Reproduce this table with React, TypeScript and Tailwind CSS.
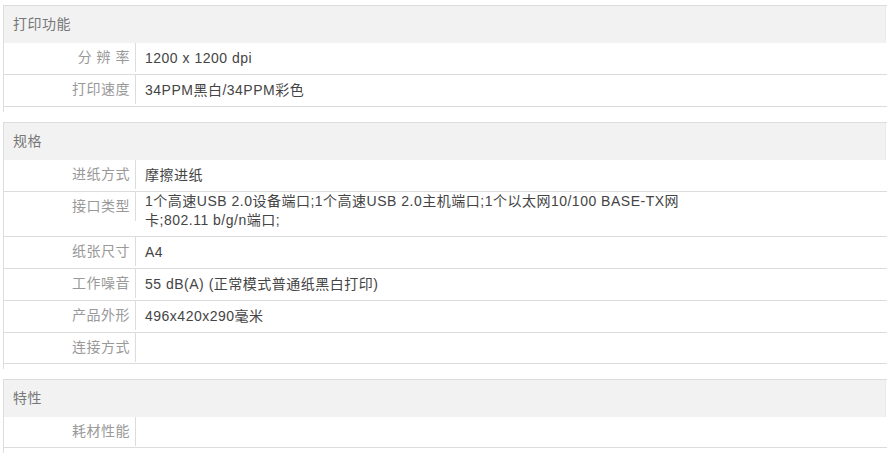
import React from "react";

type Row = { label: string; value?: string; multi?: boolean };
type Section = { title: string; rows: Row[] };

const sections: Section[] = [
  {
    title: "打印功能",
    rows: [
      { label: "分 辨 率", value: "1200 x 1200 dpi" },
      { label: "打印速度", value: "34PPM黑白/34PPM彩色" },
    ],
  },
  {
    title: "规格",
    rows: [
      { label: "进纸方式", value: "摩擦进纸" },
      {
        label: "接口类型",
        value:
          "1个高速USB 2.0设备端口;1个高速USB 2.0主机端口;1个以太网10/100 BASE-TX网卡;802.11 b/g/n端口;",
        multi: true,
      },
      { label: "纸张尺寸", value: "A4" },
      { label: "工作噪音", value: "55 dB(A) (正常模式普通纸黑白打印)" },
      { label: "产品外形", value: "496x420x290毫米" },
      { label: "连接方式", value: "" },
    ],
  },
  {
    title: "特性",
    rows: [{ label: "耗材性能", value: "" }],
  },
];

const SpecRow = ({ row }: { row: Row }) => {
  return (
    <div className="flex items-start border-b border-[#dcdcdc] min-h-[31px]">
      <div className="w-[132px] shrink-0 h-[29px] leading-[29px] text-right pr-[5px] border-r border-[#dcdcdc] text-[#999999] whitespace-pre">
        {row.label}
      </div>
      {row.multi ? (
        <div className="pl-[9px] pt-0 pb-[6px] leading-[19px] text-[#444444] max-w-[560px]">
          {row.value}
        </div>
      ) : (
        <div className="pl-[9px] pt-[6px] pb-[6px] leading-[19px] text-[#444444]">
          {row.value}
        </div>
      )}
    </div>
  );
};

export default function App() {
  return (
    <div
      className="w-[891px] h-[453px] overflow-hidden bg-white pt-[5px] pl-[3px] text-[14px] tracking-[0.5px]"
      style={{ fontFamily: '"Liberation Sans", Arial, "Noto Sans CJK SC", sans-serif' }}
    >
      {sections.map((section) => (
        <div
          key={section.title}
          className="w-[884px] border-l border-t border-[#dcdcdc] pb-[5px] mb-[10px]"
        >
          <div className="h-[37px] leading-[37px] bg-[#f2f2f2] pl-[9px] text-[#777777] border-r border-[#ebebeb] mr-[1px]">
            {section.title}
          </div>
          {section.rows.map((row) => (
            <SpecRow key={row.label} row={row} />
          ))}
        </div>
      ))}
    </div>
  );
}
